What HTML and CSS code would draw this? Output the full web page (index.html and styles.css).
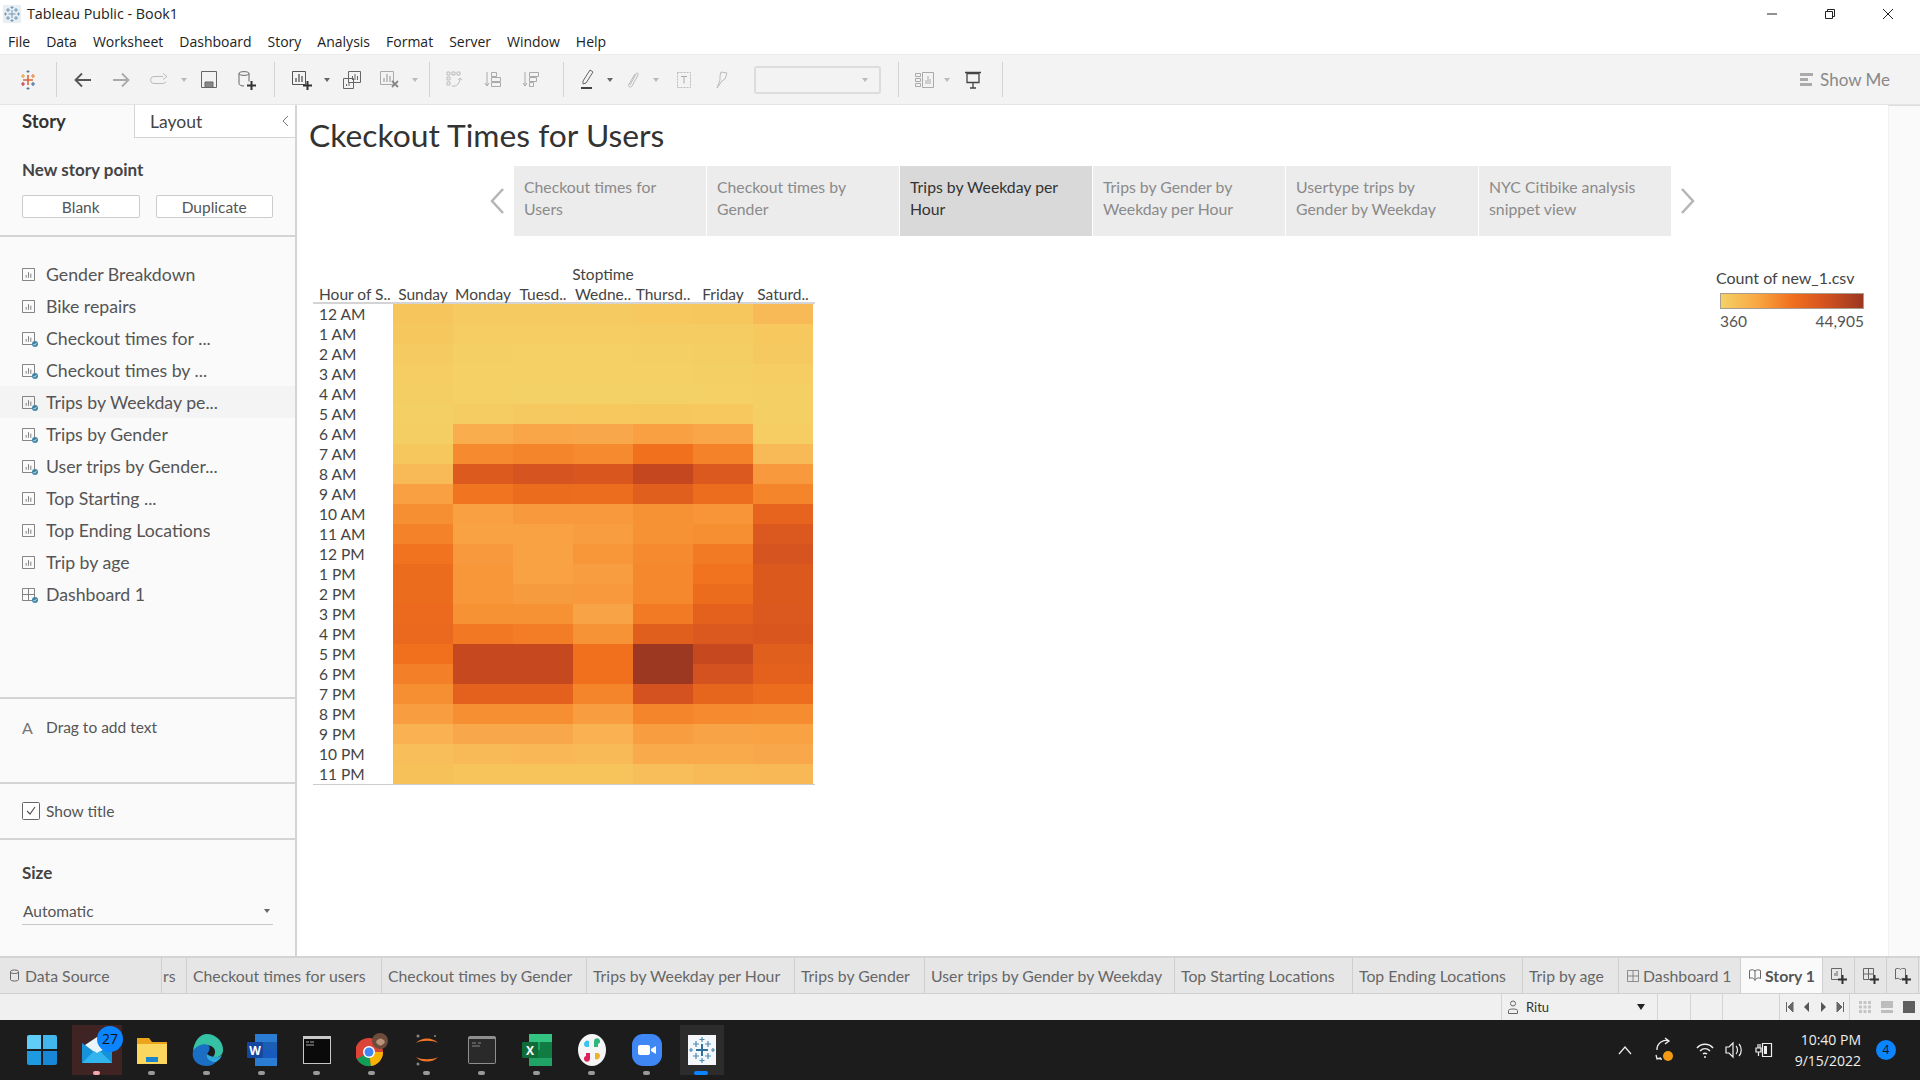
FILE: index.html
```html
<!DOCTYPE html>
<html lang="en">
<head>
    <meta charset="UTF-8">
    <title>Tableau Public - Book1</title>
    <link rel="stylesheet" href="styles.css">
</head>
<body>
    <svg class="sprite" width="0" height="0">
        <symbol id="sheet" viewBox="0 0 14 14"><path d="M.5.5h13v13H.5z" fill="none" stroke="#777"/><path d="M4.5 10.500v-3M7 10.500v-6M9.500 10.500v-4.500" stroke="#777" fill="none"/></symbol>
        <symbol id="dash" viewBox="0 0 14 14"><path d="M.5.5h13v13H.5zM.5 7h13M7 .5v13" fill="none" stroke="#777"/></symbol>
        <symbol id="badge" viewBox="0 0 8 8"><circle cx="4" cy="4" r="4" fill="#3f87a6"/><path d="M2 4l1.500 1.500L6 2.800" stroke="#fff" fill="none"/></symbol>
        <symbol id="plus" viewBox="0 0 9 9"><path d="M4.500 0v9M0 4.500h9" stroke="#333" stroke-width="2"/></symbol>
    </svg>

    <header class="titlebar">
        <svg class="app-icon" width="18" height="18" viewBox="0 0 18 18"><rect width="18" height="18" fill="#e9eef3"/><path d="M9 5v8M5.500 9h7M5 3v4M3 5h4M13 3v4M11 5h4M5 11v4M3 13h4M13 11v4M11 13h4M9 1v3M7.500 2.500h3M9 14v3M7.500 15.500h3M2.500 7.500v3M1 9h3M15.500 7.500v3M14 9h3" stroke="#6f97b8" stroke-width="1"/></svg>
        <span class="app-title">Tableau Public - Book1</span>
        <div class="win-controls">
            <svg width="12" height="12" viewBox="0 0 12 12"><path d="M1 6h10" stroke="#222"/></svg>
            <svg width="12" height="12" viewBox="0 0 12 12"><path d="M1.500 3.500h7v7h-7zM3.500 3.500v-2h7v7h-2" fill="none" stroke="#222"/></svg>
            <svg width="12" height="12" viewBox="0 0 12 12"><path d="M1 1l10 10M11 1L1 11" stroke="#222"/></svg>
        </div>
    </header>

    <nav class="menubar">
        <span>File</span><span>Data</span><span>Worksheet</span><span>Dashboard</span><span>Story</span><span>Analysis</span><span>Format</span><span>Server</span><span>Window</span><span>Help</span>
    </nav>

    <div class="toolbar">
        <div class="tool-logo">
            <svg width="18" height="20" viewBox="0 0 18 20"><path d="M9 5v10M4 10h10" stroke="#d9653a" stroke-width="1.600"/><path d="M4 4v4M2 6h4" stroke="#e8a33d" stroke-width="1.200"/><path d="M14 4v4M12 6h4" stroke="#e8843d" stroke-width="1.200"/><path d="M4 12v4M2 14h4" stroke="#c9344a" stroke-width="1.200"/><path d="M14 12v4M12 14h4" stroke="#3d6f9c" stroke-width="1.200"/><path d="M9 0v3M7.500 1.500h3M9 17v3M7.500 18.500h3" stroke="#59799c" stroke-width="1"/></svg>
        </div>
        <span class="tool-sep"></span>
        <div class="tool-group first">
            <span class="tool"><svg width="18" height="16" viewBox="0 0 18 16"><path d="M17 8H2M8 1.500L1.500 8 8 14.500" fill="none" stroke="#555" stroke-width="1.800"/></svg></span>
            <span class="tool"><svg width="18" height="16" viewBox="0 0 18 16"><path d="M1 8h15M10 1.500L16.500 8 10 14.500" fill="none" stroke="#aaa" stroke-width="1.800"/></svg></span>
            <span class="tool"><svg width="20" height="14" viewBox="0 0 20 14"><path d="M14 3.500H5a3.500 3.500 0 0 0 0 7h9a3.500 3.500 0 0 0 3-2M14 .5l4 3-4 3" fill="none" stroke="#bbb"/></svg></span>
            <span class="caret off"></span>
            <span class="tool"><svg width="16" height="17" viewBox="0 0 16 17"><path d="M.5.500h15v16H.5z" fill="none" stroke="#666"/><path d="M4 16v-5h8v5" fill="#888" stroke="#666"/></svg></span>
            <span class="tool"><svg width="18" height="20" viewBox="0 0 18 20"><path d="M1 3.500C1 1 11 1 11 3.500v8M1 3.500v10C1 15 3 16 6 16M1 3.500C1 6 11 6 11 3.500" fill="none" stroke="#666"/><use href="#plus" x="9" y="11" width="9" height="9"/></svg></span>
        </div>
        <span class="tool-sep"></span>
        <div class="tool-group">
            <span class="tool"><svg width="20" height="20" viewBox="0 0 20 20"><path d="M.5 1.500h13v13H.5z" fill="none" stroke="#555"/><path d="M4 12V8M7 12V4M10 12V6" stroke="#555" stroke-width="1.300" fill="none"/><use href="#plus" x="11" y="11" width="9" height="9"/></svg></span>
            <span class="caret"></span>
            <span class="tool"><svg width="18" height="18" viewBox="0 0 18 18"><path d="M5.500.5h12v11h-12zM.5 7.500h10v10H.5z" fill="#f3f3f3" stroke="#666"/><path d="M9.500 9V5M12 9V3M14.500 9V5M3.500 15v-2M6 15v-4" stroke="#666"/></svg></span>
            <span class="tool"><svg width="20" height="20" viewBox="0 0 20 20"><path d="M.5 1.500h13v13H.5z" fill="none" stroke="#aaa"/><path d="M4 12V8M7 12V4M10 12V6" stroke="#aaa" stroke-width="1.300" fill="none"/><path d="M12 11l6 6M18 11l-6 6" stroke="#888" stroke-width="1.800"/></svg></span>
            <span class="caret off"></span>
        </div>
        <span class="tool-sep"></span>
        <div class="tool-group third sorts">
            <span class="tool"><svg width="18" height="18" viewBox="0 0 18 18"><path d="M1 1h3v3H1zM6 1h3v3H6zM11 1h3v3h-3zM1 6h3v3H1zM1 11h3v3H1zM6 15c5 1 8-3 8-8M12 9l2-2 2 2" fill="none" stroke="#bbb"/></svg></span>
            <span class="tool"><svg width="18" height="18" viewBox="0 0 18 18"><path d="M3 1v14M1 12l2 3 2-3M7.500 1.500h5v4h-5zM7.500 6.500h9v4h-9zM7.500 11.500h9v4h-9z" fill="none" stroke="#aaa"/></svg></span>
            <span class="tool"><svg width="18" height="18" viewBox="0 0 18 18"><path d="M3 1v14M1 12l2 3 2-3M7.500 1.500h9v4h-9zM7.500 6.500h7v4h-7zM7.500 11.500h4v4h-4z" fill="none" stroke="#aaa"/></svg></span>
        </div>
        <span class="tool-sep"></span>
        <div class="tool-group third">
            <span class="tool small"><svg width="14" height="21" viewBox="0 0 14 21"><path d="M10 1l3 2-7 11-3 1 0-3z" fill="none" stroke="#666"/><path d="M1 19h11" stroke="#444" stroke-width="2"/></svg></span>
            <span class="caret"></span>
            <span class="tool small"><svg width="12" height="18" viewBox="0 0 12 18"><path d="M3 14L9 3c1-2 3-.5 2 1L5 15c-1.500 2.500-4.500.5-3-2L8 3" fill="none" stroke="#bbb"/></svg></span>
            <span class="caret off"></span>
            <span class="tool small text-tool"><svg width="14" height="16" viewBox="0 0 14 16"><path d="M.5.500h13v15H.5z" fill="none" stroke="#bbb" stroke-dasharray="2 1"/><path d="M4 4.500h6M7 4.500v7" stroke="#aaa"/></svg></span>
            <span class="tool small pin-tool"><svg width="13" height="18" viewBox="0 0 13 18"><path d="M6 1l6 1-2 6-3 2-5 7 3-8 0-4z" fill="none" stroke="#bbb"/></svg></span>
        </div>
        <div class="combo"><span class="caret off"></span></div>
        <span class="tool-sep"></span>
        <div class="tool-group third present">
            <span class="tool small fit-tool"><svg width="19" height="16" viewBox="0 0 19 16"><path d="M.5 1.500h5v3h-5zM.5 6.500h5v3h-5zM.5 11.500h5v3h-5zM7.500.5h11v15h-11z" fill="none" stroke="#aaa"/><path d="M11 12V8M13 12V4M15 12V7" stroke="#aaa"/></svg></span>
            <span class="caret off"></span>
            <span class="tool small pin-tool"><svg width="18" height="18" viewBox="0 0 18 18"><path d="M1 1.500h16M3 2.500h12v9H3zM9 12v5M6 17h6" fill="none" stroke="#444" stroke-width="1.300"/></svg></span>
        </div>
        <span class="tool-sep"></span>
        <div class="show-me">
            <svg width="14" height="14" viewBox="0 0 14 14"><path d="M0 0h13v3H0zM0 5h8v3H0zM0 10h12v3H0z" fill="#aaa"/></svg>
            <span>Show Me</span>
        </div>
    </div>

    <main class="workspace">
        <aside class="sidebar">
            <div class="side-tabs">
                <div class="side-tab active">Story</div>
                <div class="side-tab">Layout<svg class="collapse" width="7" height="12" viewBox="0 0 7 12"><path d="M6 1L1 6l5 5" fill="none" stroke="#777"/></svg></div>
            </div>
            <section class="new-point">
                <h3>New story point</h3>
                <div class="btn-row">
                    <button class="side-btn">Blank</button>
                    <button class="side-btn">Duplicate</button>
                </div>
            </section>
            <section class="sheet-list">
                <div class="sheet-item"><svg class="sheet-icon"><use href="#sheet" width="13" height="13" y="2"/></svg>Gender Breakdown</div>
                <div class="sheet-item"><svg class="sheet-icon"><use href="#sheet" width="13" height="13" y="2"/></svg>Bike repairs</div>
                <div class="sheet-item"><svg class="sheet-icon"><use href="#sheet" width="13" height="13" y="2"/><use href="#badge" x="10" y="11" width="6" height="6"/></svg>Checkout times for ...</div>
                <div class="sheet-item"><svg class="sheet-icon"><use href="#sheet" width="13" height="13" y="2"/><use href="#badge" x="10" y="11" width="6" height="6"/></svg>Checkout times by ...</div>
                <div class="sheet-item current"><svg class="sheet-icon"><use href="#sheet" width="13" height="13" y="2"/><use href="#badge" x="10" y="11" width="6" height="6"/></svg>Trips by Weekday pe...</div>
                <div class="sheet-item"><svg class="sheet-icon"><use href="#sheet" width="13" height="13" y="2"/><use href="#badge" x="10" y="11" width="6" height="6"/></svg>Trips by Gender</div>
                <div class="sheet-item"><svg class="sheet-icon"><use href="#sheet" width="13" height="13" y="2"/><use href="#badge" x="10" y="11" width="6" height="6"/></svg>User trips by Gender...</div>
                <div class="sheet-item"><svg class="sheet-icon"><use href="#sheet" width="13" height="13" y="2"/></svg>Top Starting ...</div>
                <div class="sheet-item"><svg class="sheet-icon"><use href="#sheet" width="13" height="13" y="2"/></svg>Top Ending Locations</div>
                <div class="sheet-item"><svg class="sheet-icon"><use href="#sheet" width="13" height="13" y="2"/></svg>Trip by age</div>
                <div class="sheet-item"><svg class="sheet-icon"><use href="#dash" width="13" height="13" y="2"/><use href="#badge" x="10" y="11" width="6" height="6"/></svg>Dashboard 1</div>
            </section>
            <section class="drag-text">
                <span class="drag-a">A</span><span>Drag to add text</span>
            </section>
            <section class="show-title">
                <svg width="18" height="18" viewBox="0 0 18 18"><rect x=".5" y=".5" width="17" height="17" rx="1" fill="#fff" stroke="#666"/><path d="M5 9l3 3 5-7" fill="none" stroke="#555" stroke-width="1.200"/></svg>
                <span>Show title</span>
            </section>
            <section class="size-box">
                <h3>Size</h3>
                <div class="size-select">Automatic<span class="caret"></span></div>
            </section>
        </aside>

        <div class="story">
            <h1 class="story-title">Ckeckout Times for Users</h1>
            <div class="story-nav">
                <svg class="nav-arrow" width="16" height="28" viewBox="0 0 16 28"><path d="M14 2L3 14l11 12" fill="none" stroke="#b5b5b5" stroke-width="2.500"/></svg>
                <div class="point">Checkout times for Users</div>
                <div class="point">Checkout times by Gender</div>
                <div class="point active">Trips by Weekday per Hour</div>
                <div class="point">Trips by Gender by Weekday per Hour</div>
                <div class="point">Usertype trips by Gender by Weekday</div>
                <div class="point">NYC Citibike analysis snippet view</div>
                <svg class="nav-arrow" width="16" height="28" viewBox="0 0 16 28"><path d="M2 2l11 12L2 26" fill="none" stroke="#b5b5b5" stroke-width="2.500"/></svg>
            </div>
            <div class="viz">
                <div class="chart">
                    <div class="chart-top">Stoptime</div>
                    <div class="heat-head">
                        <span class="hour-head">Hour of S..</span><span>Sunday</span><span>Monday</span><span>Tuesd..</span><span>Wedne..</span><span>Thursd..</span><span>Friday</span><span>Saturd..</span>
                    </div>
                    <div class="heat" id="heat"></div>
                </div>
                <div class="legend">
                    <div class="legend-title">Count of new_1.csv</div>
                    <div class="legend-bar"></div>
                    <div class="legend-range"><span>360</span><span>44,905</span></div>
                </div>
            </div>
        </div>

        <div class="gutter"></div>
    </main>

    <div class="tabstrip">
        <div class="tab icon-tab" style="width:162px"><svg width="9" height="13" viewBox="0 0 9 13"><path d="M.5 2.500C.5.500 8.500.500 8.500 2.500v8c0 2-8 2-8 0zM.5 3c0 2 8 2 8 0" fill="none" stroke="#666"/></svg>Data Source</div>
        <div class="tab clipped" style="width:25px">rs</div>
        <div class="tab" style="width:195px">Checkout times for users</div>
        <div class="tab" style="width:205px">Checkout times by Gender</div>
        <div class="tab" style="width:208px">Trips by Weekday per Hour</div>
        <div class="tab" style="width:130px">Trips by Gender</div>
        <div class="tab" style="width:250px">User trips by Gender by Weekday</div>
        <div class="tab" style="width:178px">Top Starting Locations</div>
        <div class="tab" style="width:170px">Top Ending Locations</div>
        <div class="tab" style="width:96px">Trip by age</div>
        <div class="tab icon-tab" style="width:122px"><svg width="12" height="12" viewBox="0 0 14 14"><use href="#dash"/></svg>Dashboard 1</div>
        <div class="tab icon-tab selected" style="width:82px"><svg width="12" height="13" viewBox="0 0 12 13"><path d="M.5 1.500c2-1 4-1 5.500.5 1.500-1.500 3.500-1.500 5.500-.5v8c-2-1-4-1-5.500 2-1.500-3-3.500-3-5.500-2zM6 2v9" fill="none" stroke="#666"/></svg>Story 1</div>
        <div class="tab new"><svg width="16" height="16" viewBox="0 0 16 16"><path d="M.5.500h10v11H.5z" fill="none" stroke="#666"/><path d="M4 8V5M6 8V3" stroke="#666"/><use href="#plus" x="7" y="7" width="9" height="9"/></svg></div>
        <div class="tab new"><svg width="16" height="16" viewBox="0 0 16 16"><path d="M.5.500h10v11H.5zM.5 6h10M5.500.5v11" fill="none" stroke="#666"/><use href="#plus" x="7" y="7" width="9" height="9"/></svg></div>
        <div class="tab new"><svg width="16" height="16" viewBox="0 0 16 16"><path d="M.5 1c2-1 4-1 5 .5 1-1.500 3-1.500 5-.5v10c-2-1-4-1-5 1-1-2-3-2-5-1z" fill="none" stroke="#666"/><use href="#plus" x="7" y="7" width="9" height="9"/></svg></div>
    </div>

    <div class="statusbar">
        <div class="user-box">
            <svg width="10" height="14" viewBox="0 0 10 14"><circle cx="5" cy="3.500" r="2.500" fill="none" stroke="#666"/><path d="M.5 13.500v-3c0-2 9-2 9 0v3z" fill="none" stroke="#666"/></svg>
            <span>Ritu</span>
            <span class="caret dark"></span>
        </div>
        <span class="stat-cell w33"></span>
        <span class="stat-cell w32"></span>
        <span class="stat-cell w57"></span>
        <div class="pager">
            <svg width="8" height="10" viewBox="0 0 8 10"><path d="M.5 0v10M7 0v10L2 5z" stroke="#666" fill="#666"/></svg>
            <svg width="6" height="10" viewBox="0 0 6 10"><path d="M5 0v10L0 5z" fill="#555"/></svg>
            <svg width="6" height="10" viewBox="0 0 6 10"><path d="M1 0v10l5-5z" fill="#555"/></svg>
            <svg width="8" height="10" viewBox="0 0 8 10"><path d="M7.500 0v10M1 0v10l5-5z" stroke="#666" fill="#666"/></svg>
        </div>
        <div class="views">
            <svg width="12" height="12" viewBox="0 0 12 12"><path d="M0 0h3v3H0zM4.500 0h3v3h-3zM9 0h3v3H9zM0 4.500h3v3H0zM4.500 4.500h3v3h-3zM9 4.500h3v3H9zM0 9h3v3H0zM4.500 9h3v3h-3zM9 9h3v3H9z" fill="#c4c4c4"/></svg>
            <svg width="12" height="12" viewBox="0 0 12 12"><path d="M0 0h12v7H0zM0 9h12v3H0z" fill="#bdbdbd"/></svg>
            <svg width="12" height="12" viewBox="0 0 12 12"><rect width="12" height="12" fill="#5f5f5f"/></svg>
        </div>
    </div>

    <footer class="taskbar">
        <div class="task-icons">
            <div class="task"><svg width="30" height="30" viewBox="0 0 30 30"><path d="M0 2q0-2 2-2h12v14H0z" fill="#5fcdf7"/><path d="M16 0h12q2 0 2 2v12H16z" fill="#41b7ee"/><path d="M0 16h14v14H2q-2 0-2-2z" fill="#1e9ae0"/><path d="M16 16h14v12q0 2-2 2H16z" fill="#1888d6"/></svg></div>
            <div class="task mail"><svg width="30" height="26" viewBox="0 0 30 26"><path d="M0 6l15 10L30 6v20H0z" fill="#1592d8"/><path d="M3 8l12-8 12 8-12 9z" fill="#e9f4fb"/><path d="M0 26l12-12 3 2 3-2 12 12z" fill="#32b4ee"/></svg><span class="mail-badge">27</span><i class="dot pink"></i></div>
            <div class="task"><svg width="30" height="28" viewBox="0 0 30 28"><path d="M0 2h12l3 4h15v22H0z" fill="#eca41c"/><path d="M0 8h30v20H0z" fill="#fbd760"/><path d="M9 21h12v5H9z" fill="#1a86d0"/></svg><i class="dot"></i></div>
            <div class="task"><svg width="32" height="32" viewBox="0 0 32 32"><path d="M16 0a16 16 0 0 1 16 16c0 6-5 8-10 7 3-3 3-9-2-11-7-3-14 1-18 5C3 7 9 0 16 0z" fill="#35c1a4"/><path d="M2 17c3-5 11-8 15-6 3 2 1 7-1 9-2 4 3 9 9 8-3 3-6 4-9 4C7 32 0 26 2 17z" fill="#1a6fc4"/><path d="M16 20c-2 4 3 9 9 8 3-2 5-4 6-7-3 3-10 3-15-1z" fill="#2fa8e0"/></svg><i class="dot"></i></div>
            <div class="task"><svg width="30" height="32" viewBox="0 0 30 32"><path d="M8 0h22v32H8z" fill="#2b7cd3"/><path d="M8 8h22v8H8z" fill="#1a5fb4"/><path d="M8 16h22v8H8z" fill="#185abd"/><rect y="8" width="16" height="16" rx="1" fill="#1546a0"/><text x="8" y="21" class="app-letter">W</text></svg><i class="dot"></i></div>
            <div class="task"><svg width="28" height="28" viewBox="0 0 28 28"><rect width="28" height="28" fill="#c8c8c8"/><rect x="1" y="3" width="26" height="24" fill="#0a0a0a"/><path d="M3 6h3M7 6h4M3 9h8" stroke="#aaa"/></svg><i class="dot"></i></div>
            <div class="task"><svg width="32" height="36" viewBox="0 0 32 36"><circle cx="13" cy="20" r="14" fill="#db4437"/><path d="M13 20L1 27a14 14 0 0 0 14 7z" fill="#0f9d58"/><path d="M13 20l2 14a14 14 0 0 0 12-14z" fill="#f4b400"/><circle cx="13" cy="20" r="6" fill="#fff"/><circle cx="13" cy="20" r="4.500" fill="#4285f4"/><circle cx="24" cy="9" r="8" fill="#6d4c3d"/><path d="M20 10c3-5 7-4 9 0-3 5-7 4-9 0z" fill="#b89478"/></svg><i class="dot"></i></div>
            <div class="task"><svg width="26" height="36" viewBox="0 0 26 36"><path d="M2 11c5-6 17-6 22 0-5-3-17-3-22 0zM2 25c5 6 17 6 22 0-5 3-17 3-22 0z" fill="#f37626"/><circle cx="4" cy="4" r="1.500" fill="#888"/><circle cx="21" cy="4" r="1" fill="#888"/><circle cx="4" cy="32" r="1.500" fill="#888"/></svg><i class="dot"></i></div>
            <div class="task"><svg width="28" height="28" viewBox="0 0 28 28"><rect width="28" height="28" rx="2" fill="#8f8f8f"/><rect x="1" y="3" width="26" height="24" fill="#2a2a2a"/><path d="M4 7h4M10 7h3M4 10h8" stroke="#888"/></svg><i class="dot"></i></div>
            <div class="task"><svg width="30" height="32" viewBox="0 0 30 32"><path d="M7 0h23v32H7z" fill="#21a366"/><path d="M7 0h23v8H7z" fill="#33c481"/><path d="M7 16h23v8H7z" fill="#107c41"/><path d="M18 8h12v8H18z" fill="#107c41"/><rect y="8" width="16" height="16" rx="1" fill="#0f6b38"/><text x="8" y="21" class="app-letter">X</text></svg><i class="dot"></i></div>
            <div class="task"><svg width="30" height="34" viewBox="0 0 30 34"><ellipse cx="15" cy="17" rx="14" ry="16" fill="#f5f5f5"/><path d="M12 8v6H9a3 3 0 1 1 3-6z" fill="#36c5f0"/><path d="M17 14V8a3 3 0 1 1 4 3v3z" fill="#2eb67d"/><path d="M18 26v-6h3a3 3 0 1 1-3 6z" fill="#ecb22e"/><path d="M13 20v6a3 3 0 1 1-4-3v-3z" fill="#e01e5a"/></svg><i class="dot"></i></div>
            <div class="task"><svg width="30" height="32" viewBox="0 0 30 32"><rect width="30" height="32" rx="11" fill="#3f87f5"/><rect x="6" y="11" width="12" height="10" rx="2" fill="#fff"/><path d="M19 15l5-3v8l-5-3z" fill="#fff"/></svg><i class="dot"></i></div>
            <div class="task running"><svg width="28" height="30" viewBox="0 0 28 30"><rect width="28" height="30" fill="#f3f6fa"/><path d="M14 9v12M8 15h12" stroke="#2f6f9f" stroke-width="2"/><path d="M8 6v6M5 9h6M20 6v6M17 9h6M8 18v6M5 21h6M20 18v6M17 21h6M14 2v5M11.500 4.500h5M14 23v5M11.500 25.500h5M3 13v4M1 15h4M25 13v4M23 15h4" stroke="#4b8ab5" stroke-width="1.200"/></svg><i class="dot blue"></i></div>
        </div>
        <div class="tray">
            <svg class="tray-chevron" width="14" height="9" viewBox="0 0 14 9"><path d="M1 8l6-7 6 7" fill="none" stroke="#eee" stroke-width="1.200"/></svg>
            <svg class="tray-sync" width="22" height="26" viewBox="0 0 22 26"><path d="M16 4a9 9 0 0 0-12 9M4 21a9 9 0 0 0 5 1M12 1l4 3-4 3M3 18l1 4 4-1" fill="none" stroke="#eee" stroke-width="1.300"/><circle cx="15" cy="19" r="5" fill="#f39a12"/></svg>
            <svg class="tray-wifi" width="18" height="16" viewBox="0 0 18 16"><path d="M1 6c4-5 12-5 16 0M4 9c3-3 7-3 10 0M7 12c1-1 3-1 4 0" fill="none" stroke="#eee" stroke-width="1.500"/><circle cx="9" cy="15" r="1" fill="#eee"/></svg>
            <svg class="tray-vol" width="20" height="18" viewBox="0 0 20 18"><path d="M1 6h3l4-4v14l-4-4H1z" fill="none" stroke="#eee" stroke-width="1.200"/><path d="M11 5c2 2 2 6 0 8M14 3c3 3 3 9 0 12" fill="none" stroke="#eee" stroke-width="1.200"/></svg>
            <svg class="tray-bat" width="20" height="20" viewBox="0 0 20 20"><path d="M7.500 3.500h9v13h-9zM1 8h5v4H1zM3 4v4M5 4v4M3.500 12v4" fill="none" stroke="#eee" stroke-width="1.200"/><path d="M9 6h3v8H9z" fill="#eee"/></svg>
            <div class="clock"><div>10:40 PM</div><div>9/15/2022</div></div>
            <span class="notify">4</span>
        </div>
    </footer>

    <script src="heat.js"></script>
</body>
</html>
```

FILE: styles.css
```css
* {
    box-sizing: border-box;
}

body {
    margin: 0;
    width: 1920px;
    height: 1080px;
    overflow: hidden;
    display: flex;
    flex-direction: column;
    background-color: #fff;
    font-family: Lato, "Open Sans", sans-serif;
    color: #555;
}

.sprite {
    position: absolute;
}

/* window chrome */
.titlebar {
    height: 27px;
    display: flex;
    align-items: center;
    padding-left: 3px;
    font-family: "Open Sans", sans-serif;
    font-size: 14.300px;
    color: #222;
}

.app-title {
    margin-left: 6px;
}

.win-controls {
    margin-left: auto;
    display: flex;
    gap: 46px;
    padding-right: 26px;
}

.menubar {
    height: 27px;
    padding-top: 2px;
    display: flex;
    align-items: center;
    gap: 16px;
    padding-left: 8px;
    font-family: "Open Sans", sans-serif;
    font-size: 14px;
    color: #222;
}

.toolbar {
    height: 51px;
    flex: none;
    display: flex;
    align-items: center;
    background-color: #f3f3f3;
    border-top: 1px solid #ececec;
    border-bottom: 1px solid #e4e4e4;
}

.tool-logo {
    width: 56px;
    display: flex;
    justify-content: center;
}

.tool-sep {
    width: 1px;
    height: 35px;
    background-color: #d4d4d4;
}

.tool-group {
    display: flex;
    align-items: center;
    padding: 0 8px;
}

.tool-group.first {
    padding-left: 7px;
}

.tool-group.third {
    padding: 0 6px;
}

.tool-group.sorts {
    padding-right: 13px;
}

.tool-group.present {
    padding-right: 12px;
}

.tool {
    width: 38px;
    height: 30px;
    display: flex;
    align-items: center;
    justify-content: center;
}

.tool.small {
    width: 34px;
}

.text-tool {
    margin-left: 5px;
}

.pin-tool {
    margin-left: 3px;
}

.fit-tool {
    margin-left: 2px;
}

.caret {
    width: 0;
    height: 0;
    margin: 0 3px;
    border-left: 3.500px solid transparent;
    border-right: 3.500px solid transparent;
    border-top: 4px solid #666;
}

.caret.off {
    border-top-color: #bbb;
}

.caret.dark {
    border-top-color: #222;
    margin-left: auto;
    border-left-width: 4px;
    border-right-width: 4px;
    border-top-width: 6px;
}

.combo {
    width: 127px;
    height: 28px;
    margin: 0 17px 0 10px;
    display: flex;
    align-items: center;
    justify-content: flex-end;
    padding-right: 8px;
    border: 2px solid #dcdcdc;
    border-radius: 3px;
}

.show-me {
    margin-left: auto;
    padding-right: 30px;
    display: flex;
    align-items: center;
    gap: 6px;
    font-size: 17px;
    color: #888;
}

/* main area */
.workspace {
    flex: 1;
    min-height: 0;
    display: flex;
}

.sidebar {
    width: 297px;
    flex: none;
    display: flex;
    flex-direction: column;
    background-color: #fafafa;
    border-right: 2px solid #d4d4d4;
}

.side-tabs {
    height: 33px;
    flex: none;
    display: flex;
}

.side-tab {
    display: flex;
    align-items: center;
    font-size: 17.500px;
    color: #444;
}

.side-tab.active {
    width: 135px;
    padding-left: 22px;
    padding-bottom: 2px;
    font-size: 18.500px;
    font-weight: 700;
    color: #333;
    border-right: 1px solid #d4d4d4;
}

.side-tab:not(.active) {
    flex: 1;
    padding-left: 15px;
    border-bottom: 1px solid #d4d4d4;
    background-color: #fff;
}

.collapse {
    margin-left: auto;
    margin-right: 6px;
}

.new-point {
    height: 99px;
    flex: none;
    padding: 21px 22px 0;
    border-bottom: 2px solid #d4d4d4;
}

h3 {
    margin: 0;
    font-size: 17px;
    font-weight: 700;
    color: #444;
}

.btn-row {
    display: flex;
    gap: 16px;
    margin-top: 15px;
}

.side-btn {
    width: 118px;
    height: 23px;
    padding: 0;
    font-family: inherit;
    font-size: 15.500px;
    color: #555;
    background-color: #fff;
    border: 1px solid #ccc;
    border-radius: 2px;
}

.sheet-list {
    flex: 1;
    padding-top: 21px;
}

.sheet-item {
    height: 32px;
    display: flex;
    align-items: center;
    padding-left: 22px;
    font-size: 17.700px;
    color: #555;
}

.sheet-item.current {
    background-color: #f4f4f4;
}

.sheet-icon {
    width: 17px;
    height: 17px;
    margin-right: 7px;
    flex: none;
    overflow: visible;
}

.drag-text {
    height: 85px;
    flex: none;
    padding: 19px 0 0 22px;
    display: flex;
    align-items: flex-start;
    font-size: 15.500px;
    border-top: 2px solid #d4d4d4;
}

.drag-a {
    width: 24px;
    font-size: 16px;
    color: #777;
}

.show-title {
    height: 56px;
    flex: none;
    display: flex;
    align-items: center;
    gap: 6px;
    padding-left: 22px;
    font-size: 15.500px;
    border-top: 2px solid #d4d4d4;
}

.size-box {
    height: 118px;
    flex: none;
    padding: 22px 22px 0;
    border-top: 2px solid #d4d4d4;
}

.size-select {
    height: 27px;
    margin-top: 15px;
    padding-left: 1px;
    display: flex;
    align-items: center;
    justify-content: space-between;
    font-size: 15.500px;
    border-bottom: 1px solid #c8c8c8;
}

.story {
    flex: 1;
    min-width: 0;
    display: flex;
    flex-direction: column;
}

.story-title {
    height: 61px;
    margin: 0;
    padding-left: 12px;
    line-height: 61px;
    font-size: 31.800px;
    font-weight: 400;
    color: #333;
}

.story-nav {
    height: 70px;
    flex: none;
    display: flex;
    align-items: center;
    gap: 1.500px;
    padding-left: 183.500px;
}

.nav-arrow {
    flex: none;
    margin: 0 8px;
}

.point {
    width: 191.500px;
    height: 70px;
    padding: 10px 20px 0 10px;
    line-height: 22px;
    font-size: 15.800px;
    color: #8a8a8a;
    background-color: #ececec;
}

.point.active {
    color: #333;
    background-color: #d9d9d9;
}

.viz {
    flex: 1;
    display: flex;
    justify-content: space-between;
    padding: 28px 24px 0 16px;
}

.chart {
    width: 502px;
    font-size: 15.500px;
    color: #444;
}

.chart-top {
    height: 20px;
    line-height: 20px;
    text-align: center;
    padding-left: 78px;
}

.heat-head {
    height: 20px;
    padding-top: 1px;
    display: grid;
    grid-template-columns: 80px repeat(7, 60px);
    align-items: center;
    text-align: center;
    white-space: nowrap;
    border-bottom: 2px solid #d4d4d4;
}

.hour-head {
    text-align: left;
    padding-left: 6px;
}

.heat {
    display: grid;
    grid-template-columns: 80px repeat(7, 60px);
    grid-auto-rows: 20px;
    border-bottom: 1px solid #ccc;
}

.hour {
    padding-left: 6px;
    line-height: 20px;
    background-color: #fff;
}

.legend {
    width: 144px;
    padding-top: 4px;
    font-size: 15.500px;
    color: #444;
}

.legend-title {
    margin-left: -4px;
    white-space: nowrap;
    font-size: 16px;
    line-height: 20px;
}

.legend-bar {
    height: 16px;
    margin-top: 5px;
    border: 1px solid #a89f90;
    background: linear-gradient(to right, #f4d166, #f9a843 25%, #f0701e 50%, #d9561f 70%, #9c3722);
}

.legend-range {
    display: flex;
    justify-content: space-between;
    margin-top: 3px;
    color: #555;
}

.gutter {
    width: 32px;
    flex: none;
    background-color: #fafafa;
    border-top: 1px solid #ddd;
    border-left: 1px solid #f0f0f0;
}

/* sheet tabs */
.tabstrip {
    height: 38px;
    flex: none;
    display: flex;
    background-color: #e6e6e6;
    border-top: 2px solid #d4d4d4;
    border-bottom: 1px solid #d0d0d0;
}

.tab {
    display: flex;
    align-items: center;
    gap: 4px;
    padding-left: 6px;
    white-space: nowrap;
    font-size: 15.800px;
    color: #666;
    border-right: 1px solid #cfcfcf;
}

.tab.icon-tab {
    padding-left: 8px;
}

.tab:first-child {
    padding-left: 10px;
    gap: 6px;
}

.tab.clipped {
    padding-left: 1px;
    overflow: hidden;
}

.tab.selected {
    font-weight: 700;
    color: #555;
    background-color: #fafafa;
}

.tab.new {
    width: 32px;
    padding-left: 0;
    justify-content: center;
}

.statusbar {
    height: 26px;
    flex: none;
    display: flex;
    align-items: center;
    background-color: #f0f0f0;
    padding-left: 1501px;
    font-size: 13px;
    color: #333;
}

.user-box {
    width: 157px;
    height: 26px;
    display: flex;
    align-items: center;
    gap: 8px;
    padding: 0 9px 0 6px;
    border-left: 1px solid #d4d4d4;
    border-right: 1px solid #d4d4d4;
}

.stat-cell {
    height: 26px;
    border-right: 1px solid #d4d4d4;
}

.w33 {
    width: 33px;
}

.w32 {
    width: 32px;
}

.w57 {
    width: 57px;
}

.pager {
    width: 70px;
    height: 26px;
    display: flex;
    align-items: center;
    gap: 10px;
    padding-left: 6px;
    border-right: 1px solid #d4d4d4;
}

.views {
    display: flex;
    gap: 10px;
    padding-left: 9px;
}

/* windows taskbar */
.taskbar {
    height: 60px;
    flex: none;
    display: flex;
    align-items: center;
    justify-content: space-between;
    background-color: #1c1c1c;
    font-family: "Open Sans", sans-serif;
    color: #eee;
}

.task-icons {
    display: flex;
    padding-left: 14px;
}

.task {
    position: relative;
    width: 55px;
    height: 60px;
    display: flex;
    align-items: center;
    justify-content: center;
}

.task.mail {
    background: linear-gradient(#402424, #402424) center / 50px 50px no-repeat;
}

.task.running {
    background: linear-gradient(#2c2c2c, #2c2c2c) center / 44px 50px no-repeat;
}

.mail-badge {
    position: absolute;
    top: 6px;
    right: 1px;
    width: 26px;
    height: 26px;
    border-radius: 50%;
    text-align: center;
    line-height: 26px;
    font-size: 14px;
    color: #111;
    background-color: #0a84ff;
}

.dot {
    position: absolute;
    bottom: 5px;
    left: 24px;
    width: 7px;
    height: 4px;
    border-radius: 2px;
    background-color: #9a9a9a;
}

.dot.pink {
    background-color: #f3a6ad;
}

.dot.blue {
    left: 20px;
    width: 14px;
    background-color: #0a84ff;
}

.app-letter {
    font-family: "Open Sans", sans-serif;
    font-size: 12px;
    font-weight: 700;
    fill: #fff;
    text-anchor: middle;
}

.tray {
    display: flex;
    align-items: center;
    padding-right: 24px;
}

.tray-sync {
    margin-left: 21px;
}

.tray-wifi {
    margin-left: 21px;
}

.tray-vol {
    margin-left: 11px;
}

.tray-bat {
    margin-left: 10px;
}

.clock {
    width: 72px;
    margin-left: 14px;
    text-align: right;
    font-size: 14px;
    line-height: 21px;
    white-space: nowrap;
}

.notify {
    width: 20px;
    height: 20px;
    margin-left: 15px;
    border-radius: 50%;
    text-align: center;
    line-height: 20px;
    font-size: 12px;
    color: #111;
    background-color: #0a84ff;
}
```

FILE: heat.js
```js
// levels 0-100 read off the chart, columns are Sunday to Saturday
const hours = ['12 AM', '1 AM', '2 AM', '3 AM', '4 AM', '5 AM', '6 AM', '7 AM', '8 AM', '9 AM', '10 AM', '11 AM',
    '12 PM', '1 PM', '2 PM', '3 PM', '4 PM', '5 PM', '6 PM', '7 PM', '8 PM', '9 PM', '10 PM', '11 PM'];

const levels = [
    [10, 6, 6, 6, 8, 9, 17],
    [9, 4, 4, 4, 5, 5, 8],
    [6, 2, 1, 1, 2, 3, 7],
    [4, 1, 1, 1, 1, 2, 4],
    [3, 1, 0, 0, 0, 1, 2],
    [2, 5, 7, 8, 9, 8, 2],
    [3, 24, 27, 26, 30, 27, 4],
    [9, 40, 42, 40, 50, 43, 17],
    [17, 66, 72, 70, 85, 68, 33],
    [30, 48, 53, 52, 62, 52, 42],
    [38, 30, 33, 33, 37, 35, 58],
    [43, 29, 29, 31, 37, 38, 68],
    [49, 33, 29, 34, 40, 46, 72],
    [53, 34, 29, 31, 41, 49, 67],
    [53, 34, 32, 33, 41, 53, 67],
    [54, 37, 37, 28, 46, 60, 68],
    [55, 47, 45, 36, 62, 68, 70],
    [50, 84, 84, 50, 100, 84, 62],
    [44, 84, 84, 50, 100, 74, 60],
    [38, 60, 60, 42, 74, 57, 52],
    [31, 38, 38, 31, 42, 40, 39],
    [22, 26, 26, 22, 31, 28, 29],
    [15, 17, 19, 17, 25, 25, 26],
    [13, 11, 12, 11, 15, 17, 18]
];

const stops = [
    [0, 244, 209, 102], [10, 246, 198, 92], [20, 249, 181, 85], [30, 248, 160, 66], [40, 245, 138, 46],
    [50, 240, 112, 30], [60, 227, 97, 29], [70, 217, 86, 31], [85, 196, 71, 31], [100, 156, 55, 34]
];

function colorFor(level) {
    for (let i = 1; i < stops.length; i++) {
        if (level <= stops[i][0]) {
            const a = stops[i - 1], b = stops[i];
            const t = (level - a[0]) / (b[0] - a[0]);
            const c = [1, 2, 3].map(k => Math.round(a[k] + (b[k] - a[k]) * t));
            return `rgb(${c.join(',')})`;
        }
    }
}

const heat = document.getElementById('heat');
hours.forEach((hour, r) => {
    const label = document.createElement('div');
    label.className = 'hour';
    label.textContent = hour;
    heat.appendChild(label);
    levels[r].forEach(level => {
        const cell = document.createElement('div');
        cell.style.backgroundColor = colorFor(level);
        heat.appendChild(cell);
    });
});
```
